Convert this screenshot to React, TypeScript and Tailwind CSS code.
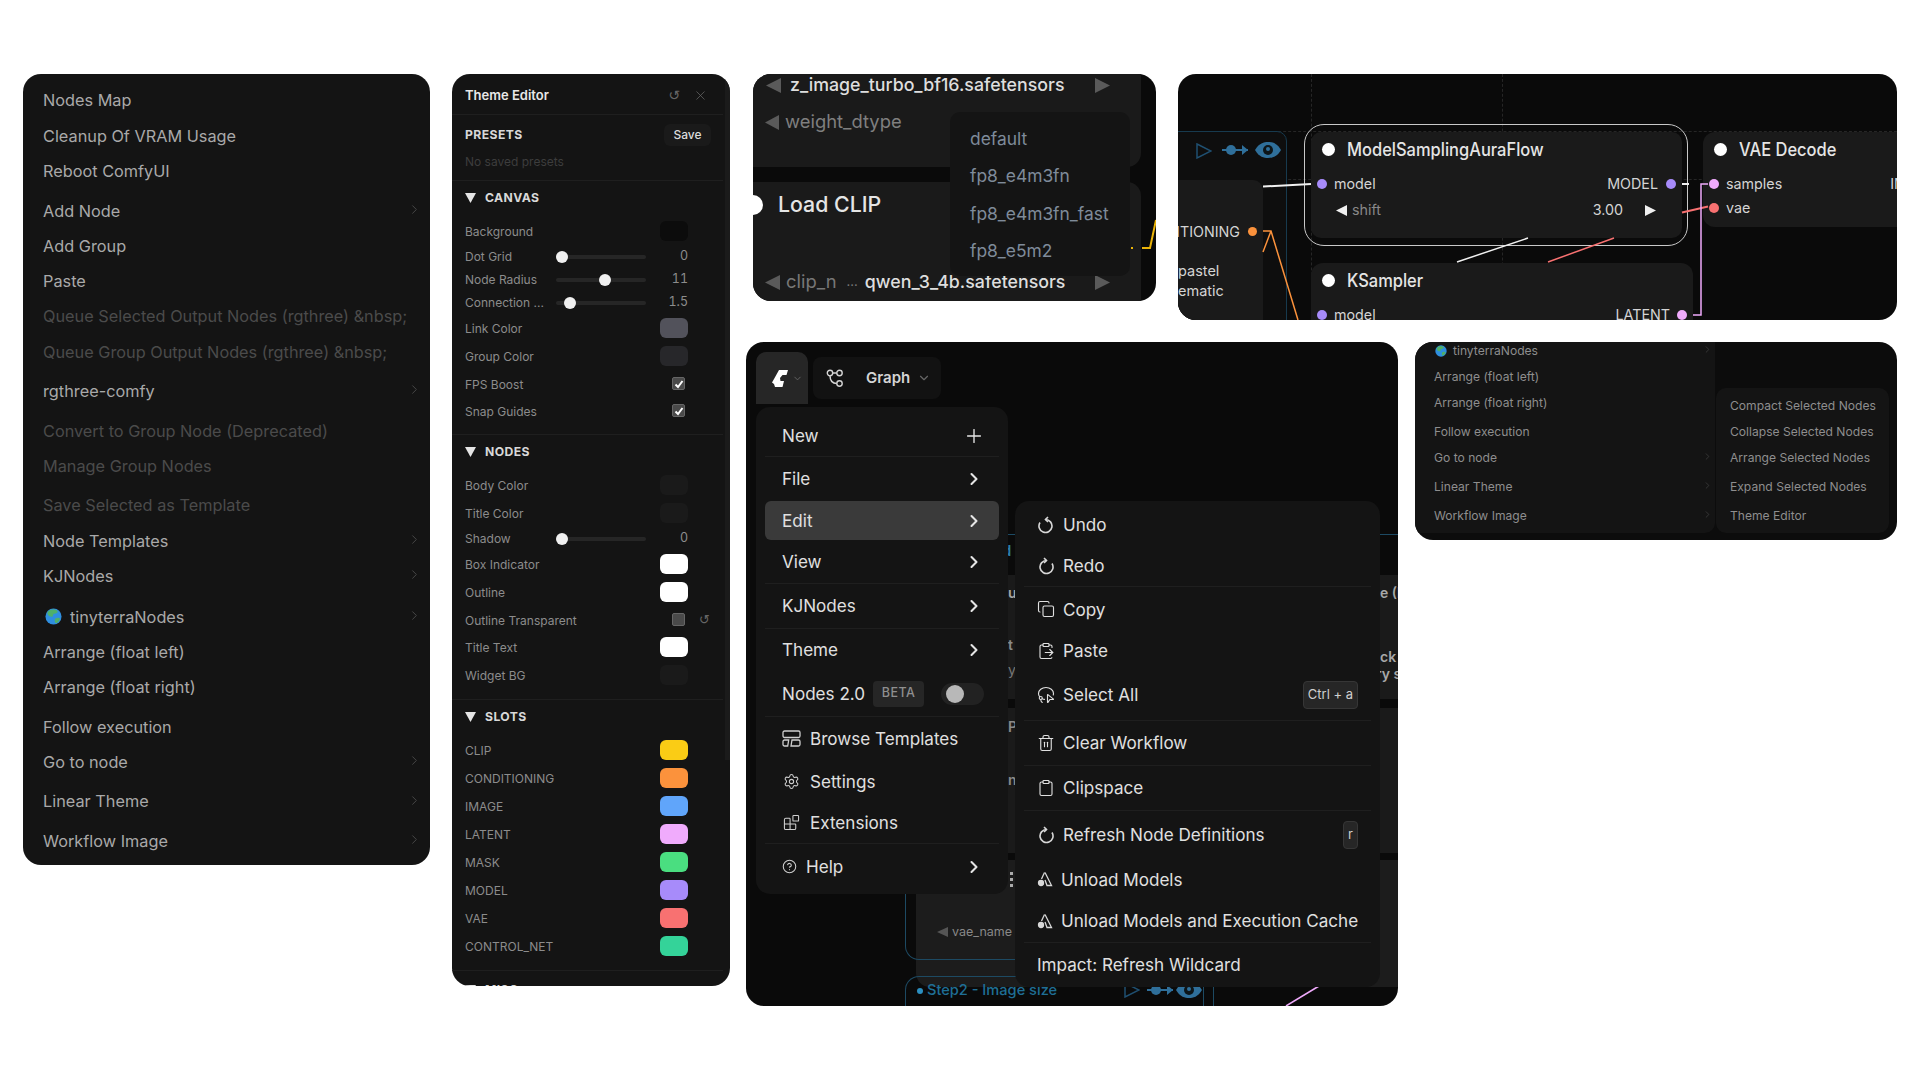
import { ChevronRight, ChevronDown, Plus, X, Copy, ClipboardPaste, LassoSelect, Trash2, Clipboard, Settings, Blocks, CircleHelp } from "lucide-react";

type MenuRow = { label: string; muted?: boolean; sub?: boolean; globe?: boolean };

const CONTEXT_GROUPS: { rows: MenuRow[]; extra?: string }[] = [
  { rows: [{ label: "Nodes Map" }, { label: "Cleanup Of VRAM Usage" }, { label: "Reboot ComfyUI" }] },
  {
    rows: [
      { label: "Add Node", sub: true },
      { label: "Add Group" },
      { label: "Paste" },
      { label: "Queue Selected Output Nodes (rgthree) &nbsp;", muted: true },
      { label: "Queue Group Output Nodes (rgthree) &nbsp;", muted: true },
    ],
  },
  { rows: [{ label: "rgthree-comfy", sub: true }] },
  { rows: [{ label: "Convert to Group Node (Deprecated)", muted: true }, { label: "Manage Group Nodes", muted: true }] },
  { rows: [{ label: "Save Selected as Template", muted: true }, { label: "Node Templates", sub: true }, { label: "KJNodes", sub: true }] },
  { rows: [{ label: "tinyterraNodes", sub: true, globe: true }, { label: "Arrange (float left)" }, { label: "Arrange (float right)" }], extra: "mt-[1px]" },
  { rows: [{ label: "Follow execution" }, { label: "Go to node", sub: true }] },
  { rows: [{ label: "Linear Theme", sub: true }] },
  { rows: [{ label: "Workflow Image", sub: true }] },
];

function Globe({ size }: { size: number }) {
  return (
    <svg width={size} height={size} viewBox="0 0 18 18" className="shrink-0">
      <circle cx="9" cy="9" r="8.5" fill="#2f8fe0" />
      <path d="M4 3c3-2 7-2 9 0 1 2-1 3-3 3S9 8 8 9 4 9 3 7s0-3 1-4z" fill="#4fb06a" />
      <path d="M11 11c2-1 4-1 5 0-1 3-3 5-5 5-1-2-1-4 0-5z" fill="#4fb06a" />
    </svg>
  );
}

function ContextMenu() {
  return (
    <div className="w-[407px] h-[791px] shrink-0 rounded-[18px] bg-[#141414] pt-[9px] overflow-hidden flex flex-col gap-[4.2px]">
      {CONTEXT_GROUPS.map((g, i) => (
        <div key={i} className={g.extra}>
          {g.rows.map((r) => (
            <div key={r.label} className="h-[35.3px] pl-[20px] pr-[8px] flex items-center justify-between text-[16.3px]">
              <span className={`flex items-center gap-[8px] ${r.muted ? "text-[#4b4b4b]" : "text-[#a9a9a9]"}`}>
                {r.globe && <span className="ml-[2px]"><Globe size={17} /></span>}
                {r.label}
              </span>
              {r.sub && <ChevronRight size={15} strokeWidth={1.5} className="text-[#4a4a4a] -mt-[3px]" />}
            </div>
          ))}
        </div>
      ))}
    </div>
  );
}

function Swatch({ color }: { color: string }) {
  return <div className="w-[28px] h-[20px] rounded-[6px]" style={{ background: color }} />;
}

function Label({ children }: { children: React.ReactNode }) {
  return <span className="mt-[2px] text-[12px] leading-[16px] text-[#8c8c8c] whitespace-nowrap">{children}</span>;
}

function SwatchRow({ label, color }: { label: string; color: string }) {
  return (
    <div className="h-[28px] flex items-center justify-between">
      <Label>{label}</Label>
      <Swatch color={color} />
    </div>
  );
}

function SliderRow({ label, value, at }: { label: string; value: string; at: number }) {
  return (
    <div className="h-[23px] flex items-center">
      <div className="w-[91px] text-[12px] leading-[16px] text-[#8c8c8c] whitespace-nowrap">{label}</div>
      <div className="relative w-[90px] h-[4px] rounded-full bg-[#262626]">
        <div className="absolute top-[-4px] w-[12px] h-[12px] rounded-full bg-[#f0f0f0]" style={{ left: at }} />
      </div>
      <div className="w-[42px] text-right text-[12.5px] tabular-nums text-[#8c8c8c]">{value}</div>
    </div>
  );
}

function CheckRow({ label, checked, reset }: { label: string; checked?: boolean; reset?: boolean }) {
  return (
    <div className="relative h-[27px] flex items-center justify-between">
      <Label>{label}</Label>
      <div className="w-[13px] h-[13px] mr-[3px] rounded-[2px] bg-[#4a4a4a] border border-[#666] flex items-center justify-center">
        {checked && (
          <svg width="10" height="10" viewBox="0 0 10 10" fill="none" stroke="#fff" strokeWidth="2">
            <path d="M1.5 5.5l2.5 2.5 4.5-6" />
          </svg>
        )}
      </div>
      {reset && <span className="absolute right-[-22px] text-[13px] text-[#666] font-['DejaVu_Sans',sans-serif]">↺</span>}
    </div>
  );
}

function SectionTitle({ children }: { children: React.ReactNode }) {
  return (
    <div className="h-[14px] flex items-center gap-[9px] mb-[12px] text-[12.2px] font-bold tracking-[0.4px] text-[#d8d8d8]">
      <svg width="11" height="10" viewBox="0 0 11 10" className="fill-[#e5e5e5]"><path d="M0 0h11L5.5 10z" /></svg>
      {children}
    </div>
  );
}

function Section({ title, children }: { title: string; children: React.ReactNode }) {
  return (
    <div className="border-b border-[#1f1f1f] pt-[10px] pb-[10px] pl-[13px] pr-[35px] mr-[7px]">
      <SectionTitle>{title}</SectionTitle>
      {children}
    </div>
  );
}

function ThemeEditor() {
  return (
    <div className="relative w-[278px] h-[912px] shrink-0 ml-[22px] rounded-[18px] bg-[#141414] overflow-hidden">
      <div className="absolute top-0 right-0 w-[5px] h-[686px] bg-[#1b1b1b]" />
      <div className="h-[41px] mr-[7px] pt-[3px] pl-[13px] pr-[15px] border-b border-[#1f1f1f] flex items-center justify-between">
        <span className="text-[13px] font-semibold text-[#e8e8e8]">Theme Editor</span>
        <div className="flex items-center gap-[13px] text-[#666]">
          <span className="text-[14px] font-['DejaVu_Sans',sans-serif]">↺</span>
          <X size={15} strokeWidth={1.2} />
        </div>
      </div>
      <div className="h-[66px] mr-[7px] pl-[13px] pr-[12px] border-b border-[#1f1f1f]">
        <div className="h-[38px] pt-[3px] flex items-center justify-between">
          <span className="text-[12.2px] font-bold tracking-[0.4px] text-[#d8d8d8]">PRESETS</span>
          <span className="w-[47px] h-[22px] mt-[-2px] rounded-[6px] bg-[#1a1a1a] flex items-center justify-center text-[12px] font-medium text-[#dcdcdc]">Save</span>
        </div>
        <div className="text-[12px] text-[#3d3d3d]">No saved presets</div>
      </div>
      <Section title="CANVAS">
        <SwatchRow label="Background" color="#0c0c0c" />
        <SliderRow label="Dot Grid" value="0" at={0} />
        <SliderRow label="Node Radius" value="11" at={43} />
        <SliderRow label="Connection ..." value="1.5" at={8} />
        <SwatchRow label="Link Color" color="#52525b" />
        <SwatchRow label="Group Color" color="#27272a" />
        <CheckRow label="FPS Boost" checked />
        <CheckRow label="Snap Guides" checked />
      </Section>
      <Section title="NODES">
        <SwatchRow label="Body Color" color="#1a1a1a" />
        <SwatchRow label="Title Color" color="#1a1a1a" />
        <SliderRow label="Shadow" value="0" at={0} />
        <SwatchRow label="Box Indicator" color="#ffffff" />
        <SwatchRow label="Outline" color="#ffffff" />
        <CheckRow label="Outline Transparent" reset />
        <SwatchRow label="Title Text" color="#ffffff" />
        <SwatchRow label="Widget BG" color="#1a1a1a" />
      </Section>
      <Section title="SLOTS">
        <SwatchRow label="CLIP" color="#facc15" />
        <SwatchRow label="CONDITIONING" color="#fb923c" />
        <SwatchRow label="IMAGE" color="#60a5fa" />
        <SwatchRow label="LATENT" color="#f0abfc" />
        <SwatchRow label="MASK" color="#4ade80" />
        <SwatchRow label="MODEL" color="#a78bfa" />
        <SwatchRow label="VAE" color="#f87171" />
        <SwatchRow label="CONTROL_NET" color="#34d399" />
      </Section>
      <div className="h-[2px]" />
      <Section title="MISC">
        <div />
      </Section>
    </div>
  );
}

function Tri({ dir, className = "", w = 15, h = 15 }: { dir: "l" | "r"; className?: string; w?: number; h?: number }) {
  return (
    <svg width={w} height={h} viewBox="0 0 10 10" preserveAspectRatio="none" className={`shrink-0 ${className}`}>
      <path d={dir === "l" ? "M10 0v10L0 5z" : "M0 0v10l10-5z"} />
    </svg>
  );
}

function LoadClipCrop() {
  return (
    <div className="relative w-[403px] h-[227px] shrink-0 rounded-[18px] bg-[#0a0a0a] overflow-hidden">
      <div className="w-[388px] h-[93px] bg-[#1a1a1a] rounded-br-[14px]">
        <div className="h-[22px] pl-[13px] pr-[31px] flex items-center gap-[9px] text-[17.8px] font-medium text-[#dedede] whitespace-nowrap">
          <Tri dir="l" className="fill-[#5a5a5a]" />
          z_image_turbo_bf16.safetensors
          <Tri dir="r" className="ml-auto fill-[#5a5a5a]" />
        </div>
        <div className="h-[22px] mt-[15px] pl-[12px] flex items-center gap-[6px] text-[18.4px] text-[#7f7f7f]">
          <Tri dir="l" className="fill-[#5a5a5a]" w={14} />
          weight_dtype
        </div>
      </div>
      <div className="w-[388px] h-[119px] mt-[15px] bg-[#1a1a1a] rounded-tr-[14px]">
        <div className="h-[46px] flex items-center gap-[15px] text-[21.3px] font-medium text-[#e5e5e5]">
          <div className="w-[20px] h-[20px] -ml-[10px] rounded-full bg-white" />
          Load CLIP
        </div>
        <div className="h-[22px] mt-[43px] pl-[12px] pr-[31px] flex items-center text-[17.8px] whitespace-nowrap">
          <Tri dir="l" className="fill-[#5a5a5a] mr-[6px]" />
          <span className="text-[#777] text-[18.4px]">clip_n</span>
          <span className="ml-[10px] text-[13px] text-[#777]">...</span>
          <span className="ml-[7px] font-medium text-[#dedede]">qwen_3_4b.safetensors</span>
          <Tri dir="r" className="ml-auto fill-[#5a5a5a]" />
        </div>
      </div>
      <div className="absolute left-[197px] top-[38px] w-[180px] h-[164px] rounded-[10px] bg-[#141414] pt-[8px] text-[17.4px] text-[#7f8b9a]">
        <div className="h-[37.5px] pl-[20px] flex items-center">default</div>
        <div className="h-[37.5px] pl-[20px] flex items-center">fp8_e4m3fn</div>
        <div className="h-[37.5px] pl-[20px] flex items-center">fp8_e4m3fn_fast</div>
        <div className="h-[37.5px] pl-[20px] flex items-center">fp8_e5m2</div>
      </div>
      <svg width="403" height="227" className="absolute left-0 top-0" fill="none">
        <path d="M378 174h2M389 174h8l6-28" stroke="#eab308" strokeWidth="2" />
      </svg>
    </div>
  );
}

function Bypass({ className }: { className: string }) {
  return (
    <svg width="26" height="12" viewBox="0 0 26 12" className={`absolute ${className}`} fill="#2f6f9a">
      <path d="M0 5h26v2H0z" />
      <circle cx="9" cy="6" r="5" />
      <path d="M20 1l6 5-6 5z" />
    </svg>
  );
}

function Eye({ className }: { className: string }) {
  return (
    <svg width="26" height="16" viewBox="0 0 26 16" className={`absolute ${className}`}>
      <path d="M0 8C4 1 9 0 13 0s9 1 13 8c-4 7-9 8-13 8S4 15 0 8z" fill="#2f6f9a" />
      <circle cx="13" cy="8" r="5" fill="#0d1518" />
      <circle cx="13" cy="7" r="2" fill="#2f6f9a" />
    </svg>
  );
}

function Pin({ color }: { color: string }) {
  return <div className="w-[10px] h-[10px] shrink-0 rounded-full" style={{ background: color }} />;
}

function NodeTitle({ title }: { title: string }) {
  return (
    <div className="h-[34px] pl-[11px] flex items-center gap-[12px]">
      <div className="w-[13px] h-[13px] shrink-0 rounded-full bg-white" />
      <span className="text-[18px] font-medium text-[#e5e5e5] whitespace-nowrap origin-left scale-x-[0.915]">{title}</span>
    </div>
  );
}

function SlotRow({ left, right, leftColor, rightColor, extra = "" }: { left: string; right?: string; leftColor: string; rightColor?: string; extra?: string }) {
  return (
    <div className={`h-[24px] px-[6px] flex items-center ${extra}`}>
      <Pin color={leftColor} />
      <span className="ml-[7px]">{left}</span>
      {right && <span className="ml-auto mr-[8px]">{right}</span>}
      {rightColor && <Pin color={rightColor} />}
    </div>
  );
}

function GraphCrop() {
  return (
    <div className="relative w-[719px] h-[246px] shrink-0 rounded-[18px] bg-[#0a0a0a] overflow-hidden text-[14.3px] text-[#d4d4d4]">
      <div className="absolute left-[133px] top-0 h-full border-l border-dashed border-[#262626]" />
      <div className="absolute left-[324px] top-0 h-full border-l border-dashed border-[#262626]" />
      <div className="absolute left-0 top-[57px] w-full border-t border-dashed border-[#262626]" />
      <div className="absolute left-0 top-[105px] w-full border-t border-dashed border-[#262626]" />
      {/* group on the left, cut by the panel edge */}
      <div className="absolute left-[-20px] top-[57px] w-[129px] h-[220px] rounded-tr-[10px] border border-[#173a4e] bg-[#0e0e0e]" />
      <svg width="16" height="16" viewBox="0 0 16 16" className="absolute left-[18px] top-[69px]" fill="none" stroke="#1f4f70" strokeWidth="1.5">
        <path d="M1 1l14 7-14 7z" />
      </svg>
      <Bypass className="left-[44px] top-[70px]" />
      <Eye className="left-[77px] top-[68px]" />
      <div className="absolute left-0 top-[106px] w-[85px] h-[150px] rounded-tr-[10px] bg-[#1a1a1a] pt-[41px] pr-[6px] flex flex-col items-end">
        <div className="flex items-center gap-[8px] whitespace-nowrap">
          ITIONING
          <div className="w-[9px] h-[9px] rounded-full bg-[#fb923c]" />
        </div>
        <div className="self-start mt-[19px] text-[14.5px] leading-[20px]">pastel<br />ematic</div>
      </div>
      {/* ModelSamplingAuraFlow */}
      <div className="absolute left-[126px] top-[50px] w-[384px] h-[122px] rounded-[20px] border-[1.5px] border-[#c8c8c8]" />
      <div className="absolute left-[133px] top-[58px] w-[371px] h-[106px] rounded-[10px] bg-[#1a1a1a]">
        <NodeTitle title="ModelSamplingAuraFlow" />
        <SlotRow left="model" right="MODEL" leftColor="#a78bfa" rightColor="#a78bfa" extra="mt-[6px]" />
        <div className="h-[24px] mt-[2px] pl-[25px] pr-[26px] flex items-center">
          <Tri dir="l" className="fill-[#f0f0f0]" w={11} h={11} />
          <span className="ml-[5px] text-[#888]">shift</span>
          <span className="ml-auto mr-[22px]">3.00</span>
          <Tri dir="r" className="fill-[#f0f0f0]" w={11} h={11} />
        </div>
      </div>
      {/* VAE Decode */}
      <div className="absolute left-[525px] top-[58px] w-[220px] h-[95px] rounded-[12px] bg-[#1a1a1a]">
        <NodeTitle title="VAE Decode" />
        <div className="h-[24px] mt-[6px] px-[6px] flex items-center">
          <Pin color="#f0abfc" />
          <span className="ml-[7px]">samples</span>
          <span className="ml-[108px] whitespace-nowrap">IM</span>
        </div>
        <SlotRow left="vae" leftColor="#f87171" />
      </div>
      {/* KSampler */}
      <div className="absolute left-[133px] top-[189px] w-[382px] h-[57px] rounded-t-[12px] bg-[#1a1a1a] overflow-hidden">
        <NodeTitle title="KSampler" />
        <div className="h-[24px] mt-[6px] pl-[6px] pr-[6px] flex items-center overflow-hidden">
          <Pin color="#a78bfa" />
          <span className="ml-[7px]">model</span>
          <span className="ml-auto mr-[7px]">LATENT</span>
          <Pin color="#f0abfc" />
        </div>
      </div>
      {/* links */}
      <svg width="719" height="246" className="absolute left-0 top-0" fill="none" strokeWidth="2">
        <path d="M85 112.5l48-2.5M504 110h7" stroke="#f0f0f0" />
        <path d="M350 164l-71 24" stroke="#f0f0f0" strokeWidth="1.5" />
        <path d="M436 164l-66 24" stroke="#f87171" strokeWidth="1.5" />
        <path d="M504 138.500l26-6" stroke="#f87171" />
        <path d="M85 157h8l27 89M85 178l8-21" stroke="#fb923c" strokeWidth="1.5" />
        <path d="M515 241h8V110h7" stroke="#f0abfc" strokeWidth="1.5" />
      </svg>
    </div>
  );
}

function ComfyLogo() {
  return (
    <svg width="16" height="17" viewBox="0 0 16 17" className="fill-white">
      <path d="M7 0h9l-1.500 5h-4L8 8l.5 3H12l-1.500 6H3l-1-3-2-1.500L2 9z" />
    </svg>
  );
}

function GraphIcon() {
  return (
    <svg width="18" height="18" viewBox="0 0 18 18" fill="none" stroke="#d4d4d4" strokeWidth="1.400">
      <circle cx="4" cy="4" r="2.700" />
      <circle cx="13.500" cy="4" r="2.700" />
      <circle cx="13.500" cy="14.500" r="2.700" />
      <path d="M6.700 4h4.100M4 6.700C4 12 7 14.500 10.800 14.500" />
    </svg>
  );
}

function TemplatesIcon() {
  return (
    <svg width="19" height="17" viewBox="0 0 19 17" fill="none" stroke="#cfcfcf" strokeWidth="1.300">
      <rect x="1" y="1" width="17" height="6.500" rx="1.500" />
      <path d="M2.500 10h4.200l-1 6H2.500a1.500 1.500 0 01-1.500-1.500v-3A1.500 1.500 0 012.500 10zM10 10h6.500a1.500 1.500 0 011.500 1.500v3a1.500 1.500 0 01-1.500 1.500H9z" />
    </svg>
  );
}

function UndoIcon({ flip }: { flip?: boolean }) {
  return (
    <svg width="18" height="18" viewBox="0 0 18 18" fill="none" stroke="#d8d8d8" strokeWidth="1.600" className={`shrink-0 ${flip ? "-scale-x-100" : ""}`}>
      <path d="M8.500 3.500a6.500 6.500 0 11-5.500 3" />
      <path d="M11 1L8.500 3.500 11 6" />
    </svg>
  );
}

function UnloadIcon() {
  return (
    <svg width="16" height="16" viewBox="0 0 16 16" fill="none" stroke="#d8d8d8" strokeWidth="1.300" className="shrink-0">
      <path d="M8 1.500L14.500 14.500H10L8 9" />
      <path d="M7.500 1.500L4.500 8" />
      <circle cx="4" cy="12" r="2.500" fill="#d8d8d8" />
    </svg>
  );
}

function Sep() {
  return <div className="h-px mx-[9px] bg-[#1f1f1f]" />;
}

function MainRow({ h, label, active, icon, sub, plus }: { h: string; label: string; active?: boolean; icon?: React.ReactNode; sub?: boolean; plus?: boolean }) {
  return (
    <div className={`${h} mx-[9px] pl-[17px] pr-[16px] flex items-center justify-between rounded-[6px] ${active ? "bg-[#3a3a3a]" : ""}`}>
      <span className="flex items-center gap-[9px]">
        {icon}
        {label}
      </span>
      {sub && <ChevronRight size={20} strokeWidth={2.5} className="text-[#e5e5e5] -mr-[1px]" />}
      {plus && <Plus size={22} strokeWidth={1.5} className="text-[#e5e5e5] -mr-[2px]" />}
    </div>
  );
}

function SubRow({ h, label, icon, kbd, gap = "gap-[8px]" }: { h: string; label: string; icon?: React.ReactNode; kbd?: string; gap?: string }) {
  return (
    <div className={`${h} mx-[4px] px-[18px] flex items-center justify-between whitespace-nowrap`}>
      <span className={`flex items-center ${gap}`}>
        {icon}
        {label}
      </span>
      {kbd && (
        <span className="h-[28px] px-[4px] rounded-[4px] bg-[#262626] border border-[#363636] flex items-center text-[13px] text-[#cfcfcf]">{kbd}</span>
      )}
    </div>
  );
}

function MenuCrop() {
  return (
    <div className="relative w-[652px] h-[664px] shrink-0 rounded-[18px] bg-[#0a0a0a] overflow-hidden">
      {/* canvas showing behind the menus */}
      <div className="absolute left-[254px] top-[192px] w-[400px] border-t border-[#1d4a63]" />
      <span className="absolute left-[256px] top-[198px] text-[15px] font-semibold text-[#2c7fa8]">d</span>
      <div className="absolute left-[262px] top-[233px] w-[400px] h-[124px] bg-[#1a1a1a]" />
      <div className="absolute left-[262px] top-[366px] w-[400px] h-[145px] bg-[#1a1a1a]" />
      <div className="absolute left-[170px] top-[518px] w-[482px] h-[127px] rounded-bl-[14px] bg-[#1c1c1c]" />
      <span className="absolute left-[262px] top-[240px] text-[14px] font-semibold text-[#a8a8a8]">u</span>
      <span className="absolute left-[262px] top-[292px] text-[14px] font-semibold text-[#8a8a8a]">t</span>
      <span className="absolute left-[262px] top-[317px] text-[14px] text-[#777]">y</span>
      <span className="absolute left-[262px] top-[374px] text-[14px] font-semibold text-[#8a8a8a]">P</span>
      <span className="absolute left-[262px] top-[427px] text-[14px] font-semibold text-[#8a8a8a]">n</span>
      <span className="absolute left-[634px] top-[240px] text-[14px] font-semibold text-[#a8a8a8] whitespace-nowrap">e (F</span>
      <span className="absolute left-[634px] top-[304px] text-[14px] font-semibold text-[#a8a8a8] whitespace-nowrap">ck</span>
      <span className="absolute left-[630px] top-[321px] text-[14px] font-semibold text-[#a8a8a8] whitespace-nowrap">ry s</span>
      <div className="absolute left-[264px] top-[530px] flex flex-col gap-[3px]">
        <i className="w-[3px] h-[3px] bg-[#aaa]" />
        <i className="w-[3px] h-[3px] bg-[#aaa]" />
        <i className="w-[3px] h-[3px] bg-[#aaa]" />
      </div>
      <div className="absolute left-[159px] top-[540px] w-[200px] h-[78px] rounded-bl-[14px] border-l border-b border-[#1d4a63]" />
      <div className="absolute left-[191px] top-[581px] flex items-center gap-[4px] text-[12.500px] text-[#888] whitespace-nowrap">
        <Tri dir="l" className="fill-[#555]" w={11} h={10} />
        vae_name
      </div>
      <div className="absolute left-[159px] top-[634px] w-[300px] h-[60px] rounded-tl-[14px] border-l border-t border-[#1d4a63]" />
      <div className="absolute left-[171px] top-[638px] flex items-center gap-[4px] text-[14.600px] font-medium text-[#1f6f96] whitespace-nowrap">
        <i className="w-[6px] h-[6px] rounded-full bg-[#2c8fc0]" />
        Step2 - Image size
      </div>
      <svg width="16" height="16" viewBox="0 0 16 16" className="absolute left-[378px] top-[640px]" fill="none" stroke="#1f4f70" strokeWidth="1.500">
        <path d="M1 1l14 7-14 7z" />
      </svg>
      <Bypass className="left-[401px] top-[642px]" />
      <Eye className="left-[430px] top-[640px]" />
      <div className="absolute left-[457px] top-[634px] h-[30px] border-l border-[#1d4a63]" />
      <div className="absolute left-[467px] top-[634px] h-[30px] border-l border-[#1d4a63]" />
      <svg width="652" height="664" className="absolute left-0 top-0" fill="none">
        <path d="M540 664l33-20" stroke="#f0abfc" strokeWidth="1.500" />
      </svg>

      {/* top bar */}
      <div className="absolute left-[10px] top-[10px] flex items-start gap-[5px]">
        <div className="w-[52px] h-[52px] rounded-t-[10px] bg-[#262626] flex items-center pl-[16px] gap-[4px]">
          <ComfyLogo />
          <ChevronDown size={11} className="text-[#666]" />
        </div>
        <div className="w-[128px] h-[42px] mt-[5px] rounded-[8px] bg-[#121212] flex items-center pl-[13px]">
          <GraphIcon />
          <span className="ml-[22px] text-[15px] font-semibold text-[#d4d4d4]">Graph</span>
          <ChevronDown size={14} className="ml-[7px] text-[#666]" />
        </div>
      </div>

      {/* main menu */}
      <div className="absolute left-[10px] top-[65px] w-[252px] h-[487px] rounded-[14px] bg-[#141414] pt-[8px] text-[17.100px] text-[#e0e0e0]">
        <MainRow h="h-[41px]" label="New" plus />
        <Sep />
        <MainRow h="h-[44px]" label="File" sub />
        <MainRow h="h-[39px]" label="Edit" sub active />
        <div className="h-px" />
        <MainRow h="h-[42px]" label="View" sub />
        <Sep />
        <MainRow h="h-[44px]" label="KJNodes" sub />
        <Sep />
        <MainRow h="h-[42px]" label="Theme" sub />
        <div className="h-[45px] mx-[9px] pl-[17px] flex items-center">
          Nodes 2.0
          <span className="ml-[8px] w-[51px] h-[26px] rounded-[4px] bg-[#262626] flex items-center justify-center text-[12.500px] font-medium tracking-[0.5px] text-[#8f8f8f]">BETA</span>
          <div className="ml-[17px] w-[43px] h-[22px] rounded-full bg-[#222] pl-[5px] flex items-center">
            <div className="w-[18px] h-[18px] rounded-full bg-[#b8b8b8]" />
          </div>
        </div>
        <Sep />
        <MainRow h="h-[44px]" label="Browse Templates" icon={<TemplatesIcon />} />
        <MainRow h="h-[41px]" label="Settings" icon={<span className="w-[19px] flex justify-center"><Settings size={17} strokeWidth={1.500} className="text-[#cfcfcf]" /></span>} />
        <MainRow h="h-[41px]" label="Extensions" icon={<span className="w-[19px] flex justify-center"><Blocks size={17} strokeWidth={1.500} className="text-[#cfcfcf]" /></span>} />
        <Sep />
        <MainRow h="h-[45px]" label="Help" sub icon={<CircleHelp size={15} strokeWidth={1.700} className="text-[#cfcfcf]" />} />
      </div>

      {/* edit submenu */}
      <div className="absolute left-[269px] top-[159px] w-[365px] h-[486px] rounded-[14px] bg-[#141414] pt-[4px] text-[17.100px] text-[#e0e0e0]">
        <SubRow h="h-[40px]" label="Undo" icon={<UndoIcon />} />
        <div className="h-px" />
        <SubRow h="h-[40px]" label="Redo" icon={<UndoIcon flip />} />
        <Sep />
        <SubRow h="h-[45px]" label="Copy" icon={<Copy size={18} strokeWidth={1.500} />} />
        <SubRow h="h-[38px]" label="Paste" icon={<ClipboardPaste size={18} strokeWidth={1.500} />} />
        <SubRow h="h-[50px]" label="Select All" kbd="Ctrl + a" icon={<LassoSelect size={18} strokeWidth={1.500} />} />
        <Sep />
        <SubRow h="h-[44px]" label="Clear Workflow" icon={<Trash2 size={18} strokeWidth={1.500} />} />
        <Sep />
        <SubRow h="h-[44px]" label="Clipspace" icon={<Clipboard size={18} strokeWidth={1.500} />} />
        <Sep />
        <SubRow h="h-[48px]" label="Refresh Node Definitions" kbd="r" icon={<UndoIcon flip />} />
        <SubRow h="h-[41px]" label="Unload Models" icon={<UnloadIcon />} />
        <SubRow h="h-[42px]" label="Unload Models and Execution Cache" icon={<UnloadIcon />} />
        <Sep />
        <SubRow h="h-[44px]" label="Impact: Refresh Wildcard" />
      </div>
    </div>
  );
}

function SmallRow({ label, sub, globe, className }: { label: string; sub?: boolean; globe?: boolean; className?: string }) {
  return (
    <div className={`h-[26px] pl-[19px] pr-[2px] flex items-center justify-between ${className ?? ""}`}>
      <span className="flex items-center gap-[6px]">
        {globe && <span className="ml-px"><Globe size={12} /></span>}
        {label}
      </span>
      {sub && <ChevronRight size={11} strokeWidth={1.500} className="text-[#444] -mt-[3px]" />}
    </div>
  );
}

function SubmenuCrop() {
  return (
    <div className="w-[482px] h-[198px] shrink-0 rounded-[18px] bg-[#0c0c0c] overflow-hidden flex items-start text-[12.100px] text-[#8e8e8e]">
      <div className="w-[300px] h-[191px] rounded-br-[10px] bg-[#141414]">
        <SmallRow label="tinyterraNodes" sub globe className="-mt-[4px]" />
        <SmallRow label="Arrange (float left)" />
        <SmallRow label="Arrange (float right)" />
        <SmallRow label="Follow execution" className="mt-[3px]" />
        <SmallRow label="Go to node" sub />
        <SmallRow label="Linear Theme" sub className="mt-[3px]" />
        <SmallRow label="Workflow Image" sub className="mt-[3px]" />
      </div>
      <div className="w-[173px] h-[145px] mt-[46px] ml-px rounded-[10px] bg-[#141414] pt-[5px] pl-[14px] whitespace-nowrap">
        <div className="h-[26px] flex items-center">Compact Selected Nodes</div>
        <div className="h-[26px] flex items-center">Collapse Selected Nodes</div>
        <div className="h-[26px] flex items-center">Arrange Selected Nodes</div>
        <div className="h-[26px] mt-[3px] flex items-center">Expand Selected Nodes</div>
        <div className="h-[26px] mt-[3px] flex items-center">Theme Editor</div>
      </div>
    </div>
  );
}

export default function App() {
  return (
    <div className="w-[1920px] h-[1080px] bg-white overflow-hidden pt-[74px] pl-[23px] flex items-start font-['Inter',sans-serif]">
      <ContextMenu />
      <ThemeEditor />
      <div className="w-[1151px] ml-[16px] shrink-0">
        <div className="flex items-start pl-[7px] gap-[22px]">
          <LoadClipCrop />
          <GraphCrop />
        </div>
        <div className="flex items-start gap-[17px] mt-[22px]">
          <MenuCrop />
          <SubmenuCrop />
        </div>
      </div>
    </div>
  );
}
